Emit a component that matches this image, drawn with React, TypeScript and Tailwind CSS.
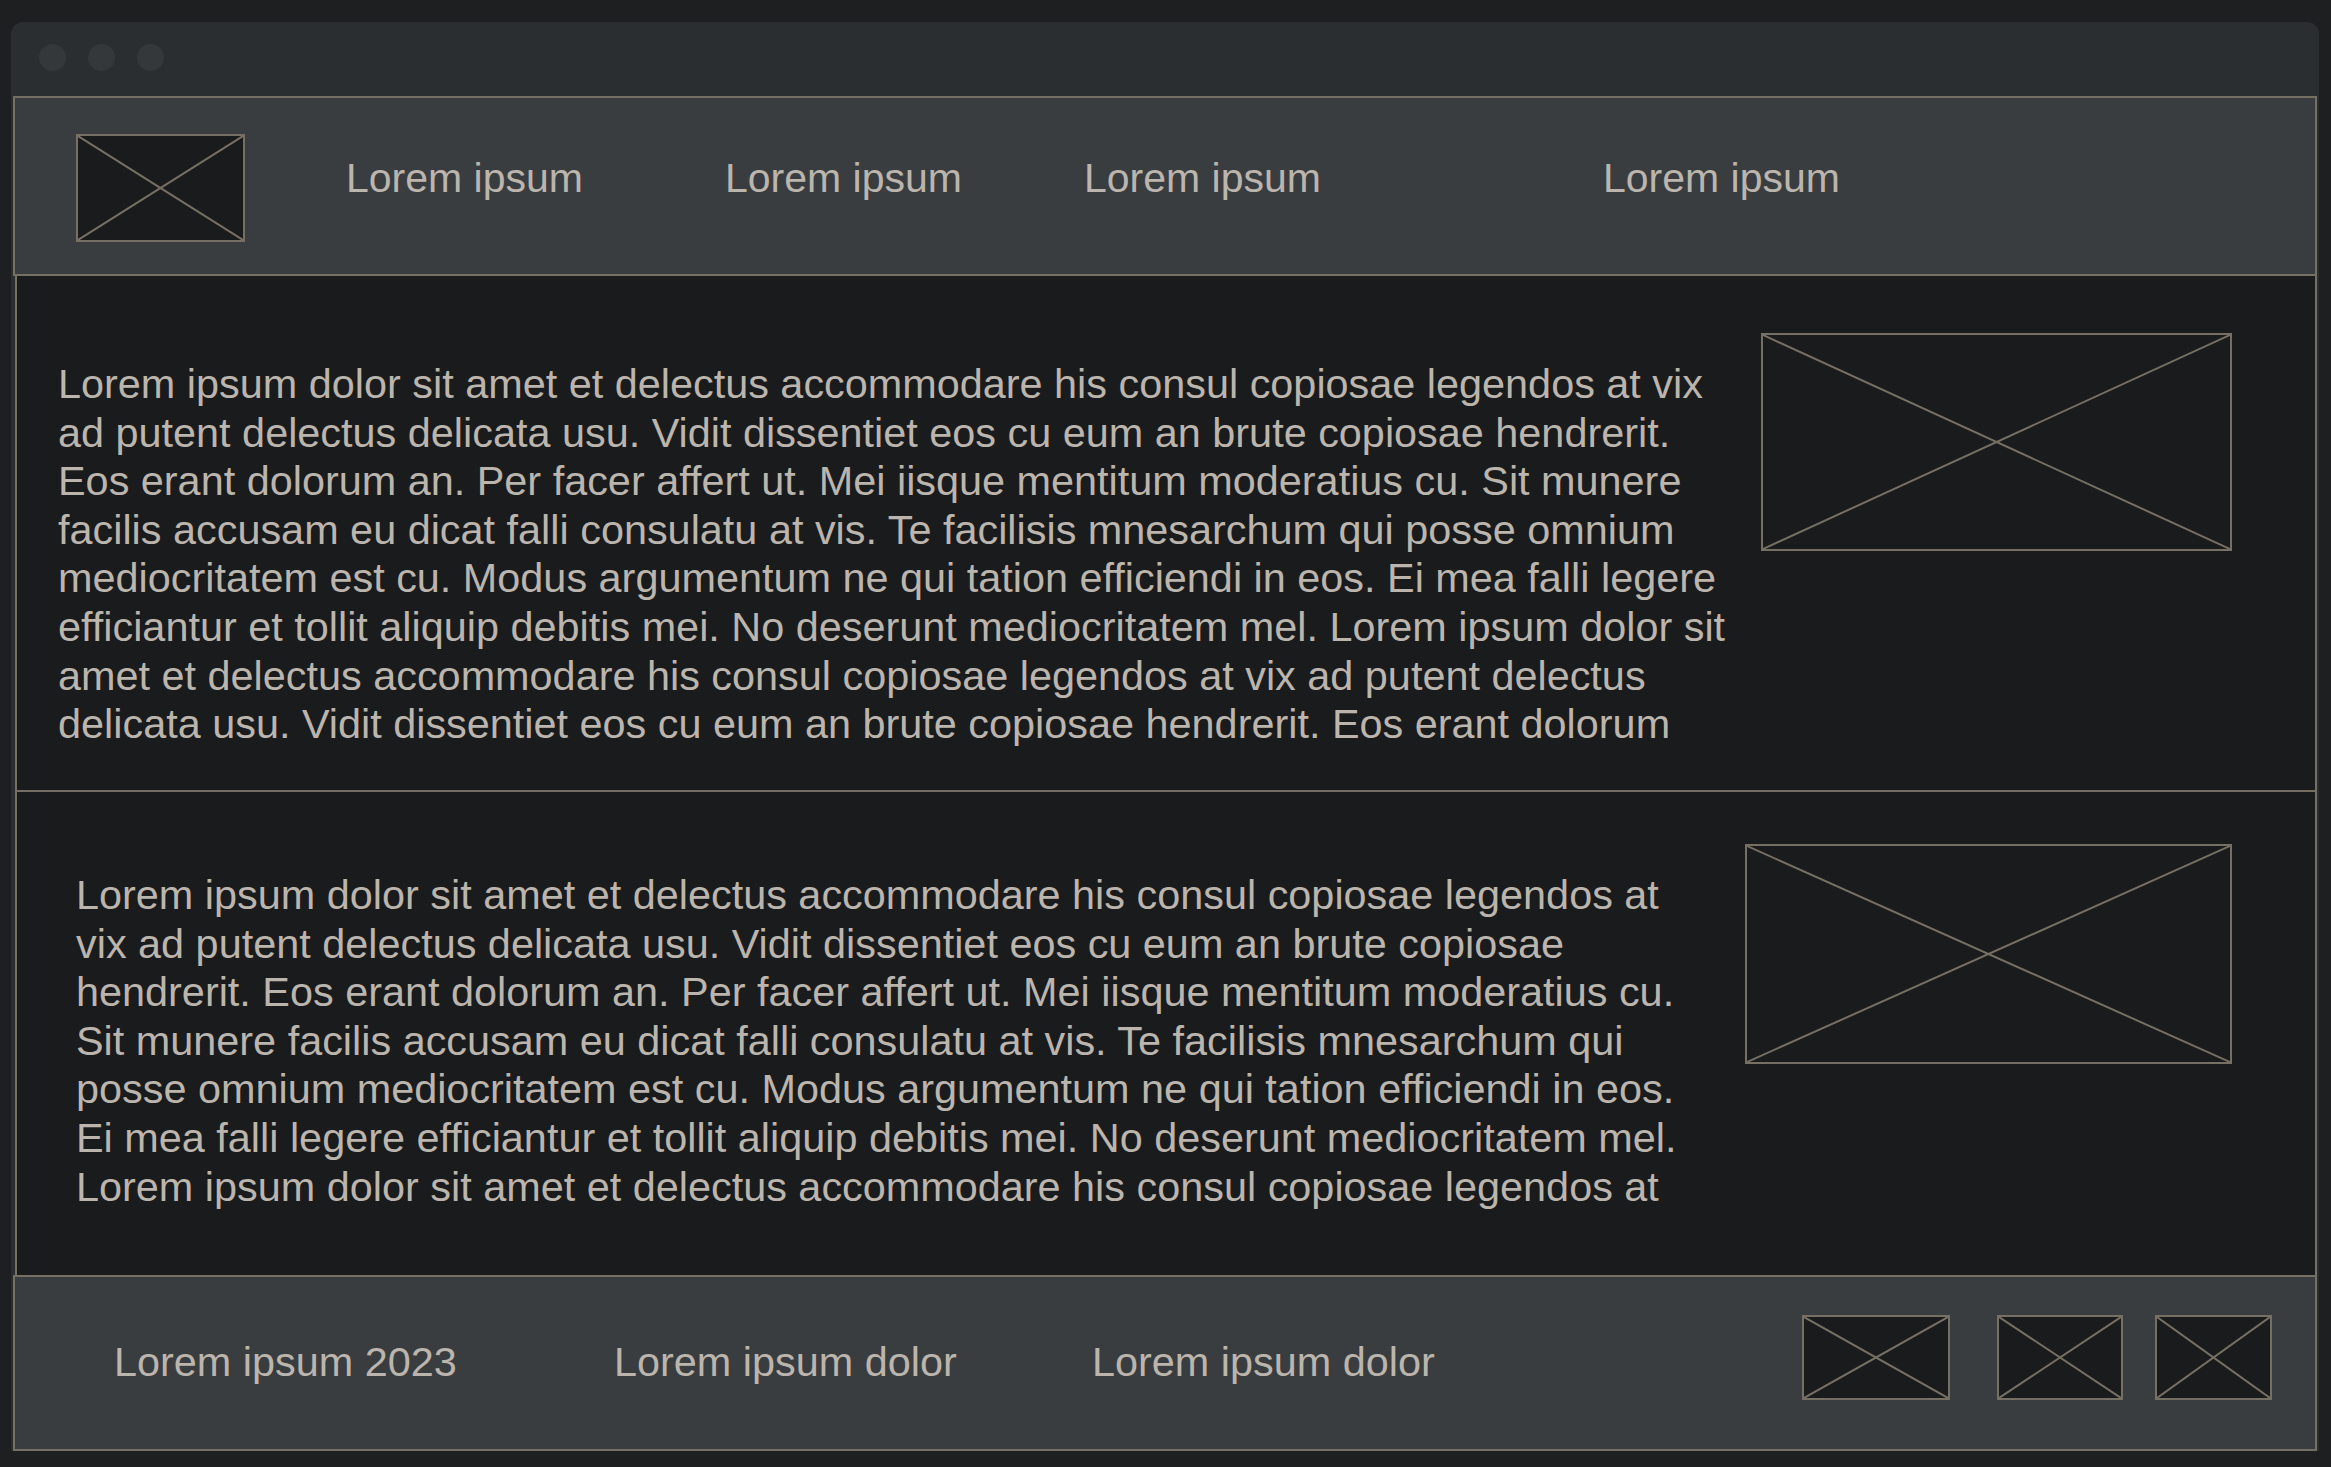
// lines are kept as in the mockup so the wrap matches
const LOREM_1 = [
  'Lorem ipsum dolor sit amet et delectus accommodare his consul copiosae legendos at vix',
  'ad putent delectus delicata usu. Vidit dissentiet eos cu eum an brute copiosae hendrerit.',
  'Eos erant dolorum an. Per facer affert ut. Mei iisque mentitum moderatius cu. Sit munere',
  'facilis accusam eu dicat falli consulatu at vis. Te facilisis mnesarchum qui posse omnium',
  'mediocritatem est cu. Modus argumentum ne qui tation efficiendi in eos. Ei mea falli legere',
  'efficiantur et tollit aliquip debitis mei. No deserunt mediocritatem mel. Lorem ipsum dolor sit',
  'amet et delectus accommodare his consul copiosae legendos at vix ad putent delectus',
  'delicata usu. Vidit dissentiet eos cu eum an brute copiosae hendrerit. Eos erant dolorum',
]

const LOREM_2 = [
  'Lorem ipsum dolor sit amet et delectus accommodare his consul copiosae legendos at',
  'vix ad putent delectus delicata usu. Vidit dissentiet eos cu eum an brute copiosae',
  'hendrerit. Eos erant dolorum an. Per facer affert ut. Mei iisque mentitum moderatius cu.',
  'Sit munere facilis accusam eu dicat falli consulatu at vis. Te facilisis mnesarchum qui',
  'posse omnium mediocritatem est cu. Modus argumentum ne qui tation efficiendi in eos.',
  'Ei mea falli legere efficiantur et tollit aliquip debitis mei. No deserunt mediocritatem mel.',
  'Lorem ipsum dolor sit amet et delectus accommodare his consul copiosae legendos at',
]

// placeholder box with a cross, the usual wireframe image
const Placeholder = ({ className }: { className: string }) => {
  return (
    <div
      className={`shrink-0 border-2 border-[#766f63] bg-[#1a1b1d] ${className}`}
    >
      <svg
        className="block h-full w-full"
        viewBox="0 0 100 100"
        preserveAspectRatio="none"
      >
        <line
          x1="0"
          y1="0"
          x2="100"
          y2="100"
          stroke="#766f63"
          strokeWidth="2"
          vectorEffect="non-scaling-stroke"
        />
        <line
          x1="100"
          y1="0"
          x2="0"
          y2="100"
          stroke="#766f63"
          strokeWidth="2"
          vectorEffect="non-scaling-stroke"
        />
      </svg>
    </div>
  )
}

const Paragraph = ({ lines, className }: { lines: string[]; className: string }) => {
  return (
    <p className={`whitespace-nowrap text-[41.4px] leading-[48.6px] ${className}`}>
      {lines.map((line, i) => (
        <span key={i} className="block">
          {line}
        </span>
      ))}
    </p>
  )
}

const App = () => {
  return (
    <div className="h-[1467px] w-full overflow-hidden bg-[#1e1f21] font-['Liberation_Sans',Arial,sans-serif] text-[41px] text-[#bbb5ad]">
      <div className="ml-[11px] mt-[22px] flex h-[1429px] w-[2308px] flex-col rounded-t-[12px] bg-[#2b2e31]">
        {/* title bar */}
        <div className="flex h-[74px] shrink-0 gap-[22px] pl-[28px] pt-[22px]">
          <div className="h-[27px] w-[27px] rounded-full bg-[#35383b]"></div>
          <div className="h-[27px] w-[27px] rounded-full bg-[#35383b]"></div>
          <div className="h-[27px] w-[27px] rounded-full bg-[#35383b]"></div>
        </div>

        <div className="mx-[2px] flex flex-col">
          {/* header */}
          <header className="flex h-[180px] items-center border-2 border-[#766f63] bg-[#3a3d40] pl-[61px]">
            <Placeholder className="mt-[4px] h-[108px] w-[169px]" />
            <nav className="mb-4 flex items-center whitespace-nowrap leading-none">
              <span className="ml-[101px] w-[235px]">Lorem ipsum</span>
              <span className="ml-[144px] w-[235px]">Lorem ipsum</span>
              <span className="ml-[124px] w-[235px]">Lorem ipsum</span>
              <span className="ml-[284px] w-[235px]">Lorem ipsum</span>
            </nav>
          </header>

          {/* content */}
          <main className="ml-[2px] flex flex-col border-x-2 border-[#766f63] bg-[#1a1b1d]">
            <section className="flex h-[516px] items-start border-b-2 border-[#766f63] pl-[41px] pr-[83px]">
              <Paragraph lines={LOREM_1} className="pt-[84px]" />
              <Placeholder className="ml-auto mt-[57px] h-[218px] w-[471px]" />
            </section>
            <section className="flex h-[483px] items-start pl-[59px] pr-[83px]">
              <Paragraph lines={LOREM_2} className="pt-[79px]" />
              <Placeholder className="ml-auto mt-[52px] h-[220px] w-[487px]" />
            </section>
          </main>

          {/* footer */}
          <footer className="flex h-[176px] items-center border-2 border-[#766f63] bg-[#3a3d40] pl-[99px] pr-[43px] text-[41.4px]">
            <span className="w-[342px] whitespace-nowrap leading-none">
              Lorem ipsum 2023
            </span>
            <span className="ml-[158px] w-[342px] whitespace-nowrap leading-none">
              Lorem ipsum dolor
            </span>
            <span className="ml-[136px] whitespace-nowrap leading-none">
              Lorem ipsum dolor
            </span>
            <div className="mb-[11px] ml-auto flex gap-[32px]">
              <Placeholder className="mr-[15px] h-[85px] w-[148px]" />
              <Placeholder className="h-[85px] w-[126px]" />
              <Placeholder className="h-[85px] w-[117px]" />
            </div>
          </footer>
        </div>
      </div>
    </div>
  )
}

export default App
